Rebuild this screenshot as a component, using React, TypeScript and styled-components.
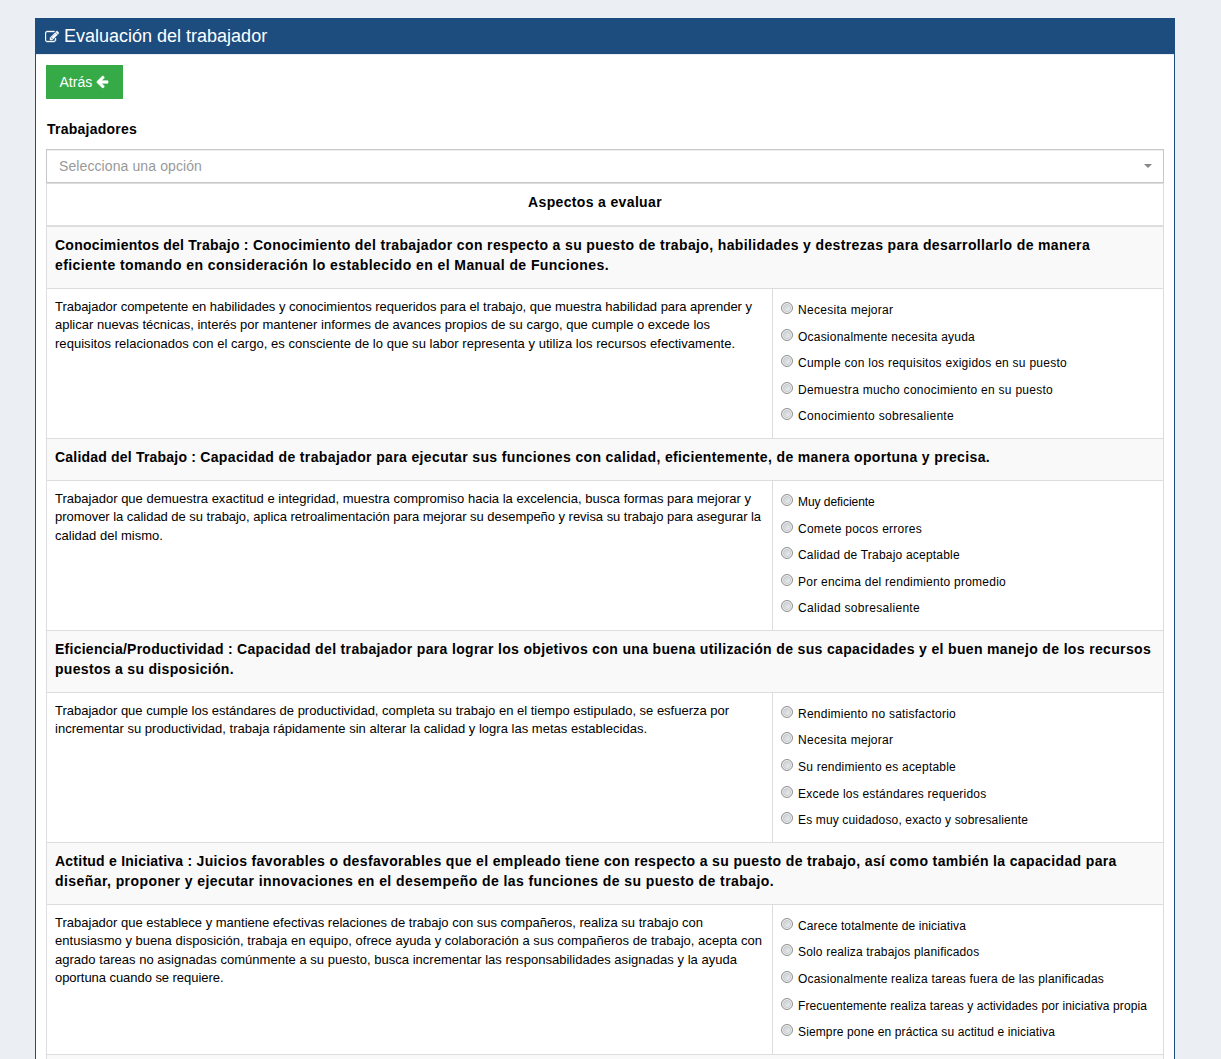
import React from 'react';
import styled, { createGlobalStyle } from 'styled-components';

type Line = [text: string, tracking: number];

interface Aspect {
  name: Line;
  heading: Line[];
  description: Line[];
  options: Line[];
}

const aspects: Aspect[] = [
  {
    name: ['Conocimientos del Trabajo : ', 0.233],
    heading: [
      ['Conocimiento del trabajador con respecto a su puesto de trabajo, habilidades y destrezas para desarrollarlo de manera', 0.366],
      ['eficiente tomando en consideración lo establecido en el Manual de Funciones.', 0.421],
    ],
    description: [
      ['Trabajador competente en habilidades y conocimientos requeridos para el trabajo, que muestra habilidad para aprender y', -0.03],
      ['aplicar nuevas técnicas, interés por mantener informes de avances propios de su cargo, que cumple o excede los', 0.003],
      ['requisitos relacionados con el cargo, es consciente de lo que su labor representa y utiliza los recursos efectivamente.', 0.037],
    ],
    options: [
      ['Necesita mejorar', 0.29],
      ['Ocasionalmente necesita ayuda', 0.215],
      ['Cumple con los requisitos exigidos en su puesto', 0.259],
      ['Demuestra mucho conocimiento en su puesto', 0.265],
      ['Conocimiento sobresaliente', 0.304],
    ],
  },
  {
    name: ['Calidad del Trabajo : ', 0.2],
    heading: [
      ['Capacidad de trabajador para ejecutar sus funciones con calidad, eficientemente, de manera oportuna y precisa.', 0.362],
    ],
    description: [
      ['Trabajador que demuestra exactitud e integridad, muestra compromiso hacia la excelencia, busca formas para mejorar y', 0.012],
      ['promover la calidad de su trabajo, aplica retroalimentación para mejorar su desempeño y revisa su trabajo para asegurar la', -0.035],
      ['calidad del mismo.', 0.019],
    ],
    options: [
      ['Muy deficiente', -0.05],
      ['Comete pocos errores', 0.264],
      ['Calidad de Trabajo aceptable', 0.203],
      ['Por encima del rendimiento promedio', 0.245],
      ['Calidad sobresaliente', 0.314],
    ],
  },
  {
    name: ['Eficiencia/Productividad : ', 0.256],
    heading: [
      ['Capacidad del trabajador para lograr los objetivos con una buena utilización de sus capacidades y el buen manejo de los recursos', 0.346],
      ['puestos a su disposición.', 0.31],
    ],
    description: [
      ['Trabajador que cumple los estándares de productividad, completa su trabajo en el tiempo estipulado, se esfuerza por', -0.01],
      ['incrementar su productividad, trabaja rápidamente sin alterar la calidad y logra las metas establecidas.', 0.016],
    ],
    options: [
      ['Rendimiento no satisfactorio', 0.235],
      ['Necesita mejorar', 0.29],
      ['Su rendimiento es aceptable', 0.219],
      ['Excede los estándares requeridos', 0.22],
      ['Es muy cuidadoso, exacto y sobresaliente', 0.147],
    ],
  },
  {
    name: ['Actitud e Iniciativa : ', 0.235],
    heading: [
      ['Juicios favorables o desfavorables que el empleado tiene con respecto a su puesto de trabajo, así como también la capacidad para', 0.363],
      ['diseñar, proponer y ejecutar innovaciones en el desempeño de las funciones de su puesto de trabajo.', 0.426],
    ],
    description: [
      ['Trabajador que establece y mantiene efectivas relaciones de trabajo con sus compañeros, realiza su trabajo con', 0.003],
      ['entusiasmo y buena disposición, trabaja en equipo, ofrece ayuda y colaboración a sus compañeros de trabajo, acepta con', 0.026],
      ['agrado tareas no asignadas comúnmente a su puesto, busca incrementar las responsabilidades asignadas y la ayuda', 0.024],
      ['oportuna cuando se requiere.', -0.05],
    ],
    options: [
      ['Carece totalmente de iniciativa', 0.126],
      ['Solo realiza trabajos planificados', 0.175],
      ['Ocasionalmente realiza tareas fuera de las planificadas', 0.203],
      ['Frecuentemente realiza tareas y actividades por iniciativa propia', 0.105],
      ['Siempre pone en práctica su actitud e iniciativa', 0.129],
    ],
  },
];

const GlobalStyle = createGlobalStyle`
  *, *::before, *::after { box-sizing: border-box; }
  body {
    margin: 0;
    background: #ebeff4;
    color: #000;
    font: 14px/20px "Liberation Sans", Arial, sans-serif;
  }
`;

const Page = styled.main`
  height: 1059px;
  padding: 18px 46px 0 35px;
  overflow: hidden;
`;

const Panel = styled.section`
  height: 1200px;
  border: 1px solid #1d4d7f;
  background: #fff;
`;

const PanelHeader = styled.header`
  display: flex;
  align-items: center;
  gap: 5px;
  height: 35px;
  padding: 0 9px;
  background: #1d4d7f;
  color: #fff;
`;

const PanelTitle = styled.h1`
  margin: 0 0 2px;
  font-size: 18px;
  font-weight: 400;
  line-height: 20px;
`;

const PanelBody = styled.div`
  padding: 10px;
  border-top: 1px solid #e9edf1;
`;

const BackButton = styled.button`
  display: flex;
  align-items: center;
  gap: 4px;
  width: 77px;
  height: 34px;
  padding: 0 0 0 13.5px;
  border: 0;
  background: #36aa47;
  color: #fff;
  font: 14px/20px "Liberation Sans", Arial, sans-serif;
`;

const FieldLabel = styled.label`
  display: block;
  margin: 20px 0 10px 1px;
  font-weight: 700;
  letter-spacing: 0.24px;
`;

const Select = styled.div`
  display: flex;
  align-items: center;
  justify-content: space-between;
  height: 34px;
  padding: 0 11px 0 12px;
  border: 1px solid #c8c8c8;
  box-shadow: inset 0 1px 1px rgba(0, 0, 0, 0.075);
  color: #999;
  letter-spacing: 0.1px;
`;

const Caret = styled.span`
  border: 4px solid transparent;
  border-top-color: #888;
  border-bottom: 0;
`;

const Table = styled.div`
  border: 1px solid #ddd;
`;

const TableTitle = styled.div`
  height: 43px;
  padding: 8px 28px 8px 8px;
  border-bottom: 2px solid #ddd;
  font-weight: 700;
  text-align: center;
  letter-spacing: 0.35px;
`;

const AspectHeading = styled.div`
  padding: 8px 8px 13px;
  border-bottom: 1px solid #ddd;
  background: #f9f9f9;
  font-weight: 700;
`;

const AspectBody = styled.div`
  display: grid;
  grid-template-columns: 725px 1fr;
  height: 149.94px;
  border-bottom: 1px solid #ddd;
`;

const Description = styled.div`
  padding: 9px 8px 8px;
  font-size: 13px;
  line-height: 18.4px;
`;

const Options = styled.div`
  padding: 7.735px 8px 0;
  border-left: 1px solid #ddd;
`;

const Option = styled.label`
  display: flex;
  align-items: center;
  height: 26.57px;
  gap: 5px;
  font-size: 12px;
`;

const Radio = styled.input.attrs({ type: 'radio' })`
  appearance: none;
  flex: none;
  width: 12px;
  height: 12px;
  margin: 0 0 4px;
  border: 1px solid #8e8f8f;
  border-radius: 50%;
  background: linear-gradient(135deg, #c2c7cc, #f6f6f6);
  box-shadow: inset 0 0 0 1px #f4f4f4, inset 0 0 0 2px #c9cdd1;
`;

const TextLine = styled.span<{ $tracking: number }>`
  display: block;
  white-space: nowrap;
  letter-spacing: ${(p) => p.$tracking}px;
`;

const AspectName = styled.span<{ $tracking: number }>`
  letter-spacing: ${(p) => p.$tracking}px;
`;

const Icon = styled.svg`
  display: block;
  flex: none;
  fill: currentColor;
  stroke: currentColor;
`;

const EditIcon = () => (
  <Icon width="14" height="14" viewBox="0 0 1792 1792" strokeWidth="50">
    <path d="M888 1184l116-116-152-152-116 116v56h96v96h56zm440-720q-16-16-33 1l-350 350q-17 17-1 33t33-1l350-350q17-17 1-33zm80 594v190q0 119-84.500 203.500t-203.500 84.500h-832q-119 0-203.500-84.500t-84.500-203.500v-832q0-119 84.500-203.500t203.500-84.500h832q63 0 117 25 15 7 18 23 3 17-9 29l-49 49q-14 14-32 8-23-6-45-6h-832q-66 0-113 47t-47 113v832q0 66 47 113t113 47h832q66 0 113-47t47-113v-126q0-13 9-22l64-64q15-15 35-7t20 29zm-96-738l288 288-672 672h-288v-288zm444 132l-92 92-288-288 92-92q28-28 68-28t68 28l152 152q28 28 28 68t-28 68z" />
  </Icon>
);

const ArrowIcon = () => (
  <Icon width="14" height="14" viewBox="100 70 1792 1792" strokeWidth="30">
    <path d="M1664 896v128q0 53-32.500 90.500t-84.500 37.500h-704l293 294q38 36 38 90t-38 90l-75 76q-37 37-90 37-52 0-91-37l-651-652q-37-37-37-90 0-52 37-91l651-650q38-38 91-38 52 0 90 38l75 74q38 38 38 91t-38 91l-293 293h704q52 0 84.500 37.500t32.500 90.500z" />
  </Icon>
);

const Lines = ({ lines, name }: { lines: Line[]; name?: Line }) => (
  <>
    {lines.map(([text, tracking], index) => (
      <TextLine key={text} $tracking={tracking}>
        {name && index === 0 && <AspectName $tracking={name[1]}>{name[0]}</AspectName>}
        {text}
      </TextLine>
    ))}
  </>
);

export default function App() {
  return (
    <>
      <GlobalStyle />
      <Page>
        <Panel>
          <PanelHeader>
            <EditIcon />
            <PanelTitle>Evaluación del trabajador</PanelTitle>
          </PanelHeader>
          <PanelBody>
            <BackButton type="button">
              Atrás <ArrowIcon />
            </BackButton>
            <FieldLabel>Trabajadores</FieldLabel>
            <Select role="combobox">
              Selecciona una opción
              <Caret />
            </Select>
            <Table>
              <TableTitle>Aspectos a evaluar</TableTitle>
              {aspects.map((aspect, index) => (
                <React.Fragment key={index}>
                  <AspectHeading><Lines lines={aspect.heading} name={aspect.name} /></AspectHeading>
                  <AspectBody>
                    <Description><Lines lines={aspect.description} /></Description>
                    <Options>
                      {aspect.options.map(([text, tracking]) => (
                        <Option key={text}>
                          <Radio name={`aspect-${index}`} />
                          <TextLine $tracking={tracking}>{text}</TextLine>
                        </Option>
                      ))}
                    </Options>
                  </AspectBody>
                </React.Fragment>
              ))}
              <AspectHeading />
            </Table>
          </PanelBody>
        </Panel>
      </Page>
    </>
  );
}
